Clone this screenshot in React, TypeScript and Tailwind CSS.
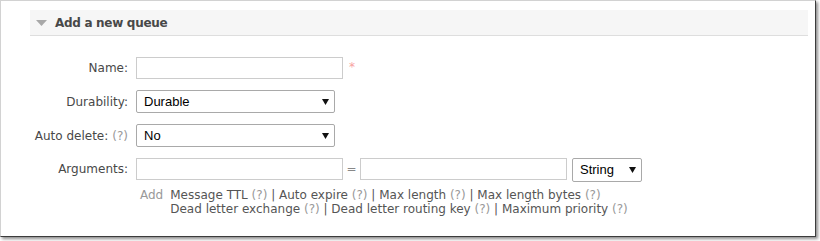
import React from 'react';

const Help = () => <span className="text-[#999]">(?)</span>;

function FakeSelect({ value, width, height = 'h-[23px]' }: { value: string; width: string; height?: string }) {
    return (
        <div className={`${width} ${height} bg-white border border-[#a9a9a9] rounded-[2px] flex items-center justify-between pl-[7px] pr-[5px] font-[family-name:'Liberation_Sans',Arial,sans-serif] text-[13px] text-black`}>
            <span>{value}</span>
            <svg width="7" height="6" viewBox="0 0 7 6">
                <path d="M0 0 H7 L3.5 6 Z" fill="#111" />
            </svg>
        </div>
    );
}

const links: string[][] = [
    ['Message TTL', 'Auto expire', 'Max length', 'Max length bytes'],
    ['Dead letter exchange', 'Dead letter routing key', 'Maximum priority'],
];

export default function App() {
    return (
        <div className="w-[820px] h-[241px] bg-white">
            <div className="w-[816px] h-[237px] bg-white border-l border-t border-l-[#d2d2d2] border-t-[#d2d2d2] border-r border-b border-r-[#3c3c3c] border-b-[#3c3c3c] shadow-[2px_2px_3px_rgba(0,0,0,0.45)] pt-[9px] pl-[29px] pr-[7px] font-[family-name:'DejaVu_Sans',Verdana,sans-serif] text-[12px] text-[#484848]">
                {/* Section header */}
                <div className="h-[26px] bg-[#f6f6f6] border-b border-[#dedede] flex items-center">
                    <svg className="ml-[6px]" width="11" height="6" viewBox="0 0 11 6">
                        <path d="M0 0 H11 L5.5 6 Z" fill="#a8a8a8" />
                    </svg>
                    <h2 className="ml-[8px] font-bold text-[12px] tracking-[-0.3px] text-[#484848]">Add a new queue</h2>
                </div>

                {/* Form */}
                <div className="mt-[21px] flex flex-col gap-[11px]">
                    <div className="flex items-start">
                        <label className="w-[98px] h-[22px] flex items-center justify-end">Name:</label>
                        <input className="ml-[8px] w-[207px] h-[22px] border border-[#cccccc] bg-white outline-none" />
                        <span className="ml-[6px] mt-[4px] text-[#f7a1a1] text-[12px] leading-none">*</span>
                    </div>
                    <div className="flex items-start">
                        <label className="w-[98px] h-[23px] flex items-center justify-end">Durability:</label>
                        <div className="ml-[8px]"><FakeSelect value="Durable" width="w-[199px]" /></div>
                    </div>
                    <div className="flex items-start">
                        <label className="w-[98px] h-[23px] flex items-center justify-end gap-[4px] whitespace-nowrap">Auto delete: <Help /></label>
                        <div className="ml-[8px]"><FakeSelect value="No" width="w-[199px]" /></div>
                    </div>
                    <div className="flex items-start">
                        <label className="w-[98px] h-[22px] flex items-center justify-end">Arguments:</label>
                        <input className="ml-[8px] w-[207px] h-[22px] border border-[#cccccc] bg-white outline-none" />
                        <span className="w-[17px] h-[22px] flex items-center justify-center text-[#888]">=</span>
                        <input className="w-[207px] h-[22px] border border-[#cccccc] bg-white outline-none" />
                        <div className="ml-[5px]"><FakeSelect value="String" width="w-[70px]" height="h-[24px]" /></div>
                    </div>
                </div>

                {/* Argument shortcuts */}
                <div className="mt-[6px] pl-[110px] flex items-start text-[12px] leading-[14px]">
                    <span className="text-[#999]">Add</span>
                    <div className="ml-[7px] text-[#555]">
                        {links.map((line, i) => (
                            <div key={i}>
                                {line.map((l, j) => (
                                    <React.Fragment key={l}>
                                        {j > 0 && ' | '}
                                        {l} <Help />
                                    </React.Fragment>
                                ))}
                            </div>
                        ))}
                    </div>
                </div>
            </div>
        </div>
    );
}
